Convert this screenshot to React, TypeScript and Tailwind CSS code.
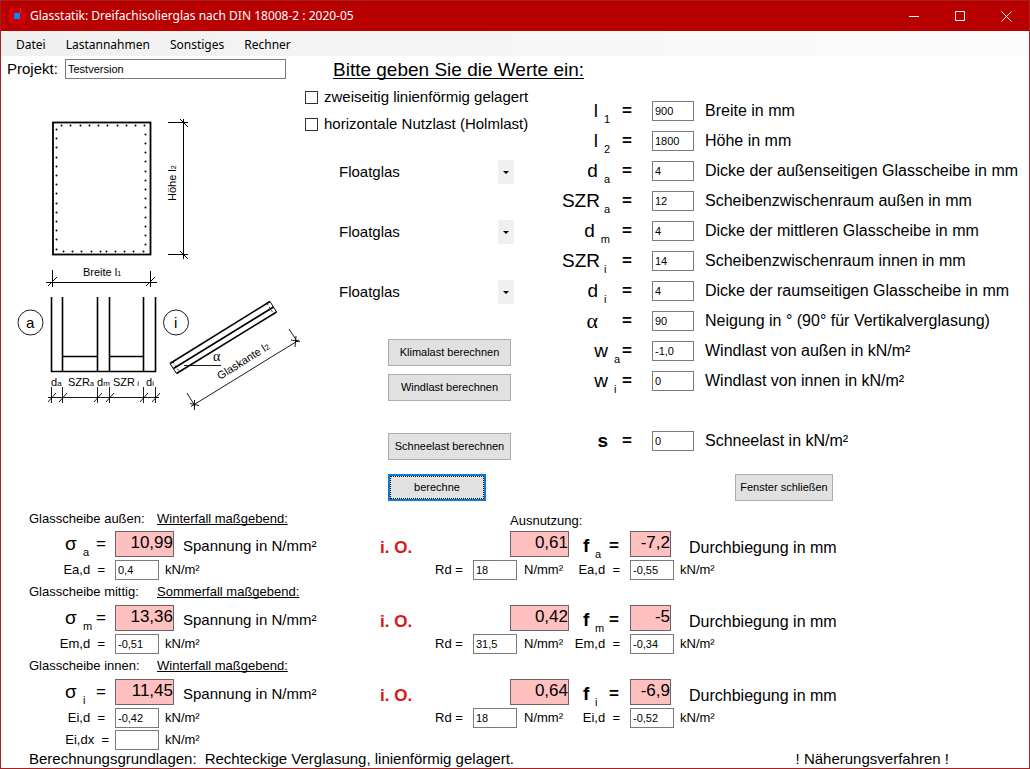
import { useState } from "react";
import type { ReactNode } from "react";

type Field = {
  id: string;
  base: string;
  sub: string;
  value: string;
  text: string;
  cell: string;
  baseClass: string;
};

const SYMBOL = "gap-1.5 pr-2.5";
const SPACER = "gap-1 pr-2.5";
const LOAD = "gap-1.5";

const fields: Field[] = [
  { id: "l1", base: "l", sub: "1", value: "900", text: "Breite in mm", cell: SYMBOL, baseClass: "" },
  { id: "l2", base: "l", sub: "2", value: "1800", text: "Höhe in mm", cell: SYMBOL, baseClass: "" },
  { id: "da", base: "d", sub: "a", value: "4", text: "Dicke der außenseitigen Glasscheibe in mm", cell: SYMBOL, baseClass: "" },
  { id: "szra", base: "SZR", sub: "a", value: "12", text: "Scheibenzwischenraum außen in mm", cell: SPACER, baseClass: "" },
  { id: "dm", base: "d", sub: "m", value: "4", text: "Dicke der mittleren Glasscheibe in mm", cell: SYMBOL, baseClass: "" },
  { id: "szri", base: "SZR", sub: "i", value: "14", text: "Scheibenzwischenraum innen in mm", cell: SPACER, baseClass: "" },
  { id: "di", base: "d", sub: "i", value: "4", text: "Dicke der raumseitigen Glasscheibe in mm", cell: SYMBOL, baseClass: "" },
  { id: "alpha", base: "α", sub: "", value: "90", text: "Neigung in ° (90° für Vertikalverglasung)", cell: SYMBOL, baseClass: "font-['Liberation_Serif',serif] text-[22px]" },
  { id: "wa", base: "w", sub: "a", value: "-1,0", text: "Windlast von außen in kN/m²", cell: LOAD, baseClass: "" },
  { id: "wi", base: "w", sub: "i", value: "0", text: "Windlast von innen in kN/m²", cell: LOAD, baseClass: "" },
];

const snow: Field = {
  id: "s", base: "s", sub: "", value: "0", text: "Schneelast in kN/m²", cell: LOAD, baseClass: "font-bold",
};

const panes = [
  { sub: "a", name: "Glasscheibe außen:", decisive: "Winterfall maßgebend:", stress: "10,99", load: "0,4", use: "0,61", rd: "18", bend: "-7,2", bendLoad: "-0,55" },
  { sub: "m", name: "Glasscheibe mittig:", decisive: "Sommerfall maßgebend:", stress: "13,36", load: "-0,51", use: "0,42", rd: "31,5", bend: "-5", bendLoad: "-0,34" },
  { sub: "i", name: "Glasscheibe innen:", decisive: "Winterfall maßgebend:", stress: "11,45", load: "-0,42", use: "0,64", rd: "18", bend: "-6,9", bendLoad: "-0,52" },
];

const inputClass = "h-5 rounded-none border border-[#7a7a7a] bg-white px-0.5 text-[11px] outline-none";
const resultClass = "h-[26px] rounded-none border border-[#6b6465] bg-[#ffc0c0] pb-0.5 text-right text-[17px] leading-5 outline-none";
const buttonClass = "h-[27px] border border-[#adadad] bg-[#e1e1e1] text-[11px] hover:bg-[#e5f1fb]";
const resultGrid = "grid h-[30px] grid-cols-[114px_265px_130px_120px_1fr] grid-rows-[30px] items-center";
const loadGrid = "grid h-[22px] grid-cols-[114px_320px_38px_157px_1fr] items-center";

function FieldRow({ field }: { field: Field }) {
  return (
    <div className="grid h-[30px] grid-cols-[60px_32px_53px_1fr] items-center">
      <label htmlFor={field.id} className={`flex items-center justify-end text-[19px] leading-6 ${field.cell}`}>
        <span className={field.baseClass}>{field.base}</span>
        <span className="min-w-1.5 pt-4 text-[11px] leading-3">{field.sub}</span>
      </label>
      <span className="pl-0.5 text-[17px] font-bold">=</span>
      <input id={field.id} defaultValue={field.value} className={`w-[42px] ${inputClass}`} />
      <span className="text-[16px] whitespace-nowrap">{field.text}</span>
    </div>
  );
}

function GlassSelect({ label }: { label: string }) {
  return (
    <div className="flex h-[60px] items-center pl-[31px]">
      <div className="relative w-[178px]">
        <select aria-label={label} className="h-[23px] w-full appearance-none bg-white pl-[3px] text-[15px] outline-none">
          <option>Floatglas</option>
          <option>ESG</option>
          <option>VSG</option>
        </select>
        <span className="pointer-events-none absolute inset-y-0 right-0 flex w-4 items-center justify-center bg-[#f0f0f0]">
          <svg width="6" height="3" viewBox="0 0 6 3">
            <path d="M0 0h6L3 3z" />
          </svg>
        </span>
      </div>
    </div>
  );
}

function CheckRow({ children }: { children: ReactNode }) {
  return (
    <label className="flex h-[27px] items-center gap-1.5 text-[15px] whitespace-nowrap">
      <input type="checkbox" className="size-[13px] appearance-none border border-[#333] bg-white checked:bg-[#0078d7]" />
      {children}
    </label>
  );
}

function Sketch() {
  const top = [61, 70, 80, 89, 98, 107, 117, 126, 135, 144];
  const bottom = [63, 72, 81, 91, 100, 106, 115, 124, 133, 143];
  const left = [129, 138, 147, 157, 166, 175, 184, 193, 203, 212, 221, 230, 239, 249];
  const right = [134, 143, 152, 161, 171, 180, 189, 198, 207, 217, 226, 235, 244];
  const ticks = [51, 62, 97, 109, 143, 155];

  return (
    <svg className="h-[330px] w-[300px]" viewBox="1 84 300 330" fill="none" stroke="#000" fontFamily="Liberation Sans, sans-serif" role="img" aria-label="Skizze der Verglasung">
      <rect x="53" y="122.5" width="97.5" height="132" strokeWidth="1.8" />
      <g fill="#000" stroke="none">
        {top.map((x) => <circle key={`t${x}`} cx={x + 0.5} cy="125.5" r="1" />)}
        {bottom.map((x) => <circle key={`b${x}`} cx={x + 0.5} cy="251.5" r="1" />)}
        {left.map((y) => <circle key={`l${y}`} cx="56.5" cy={y + 0.5} r="1" />)}
        {right.map((y) => <circle key={`r${y}`} cx="145.5" cy={y + 0.5} r="1" />)}
      </g>

      {/* dimension lines of the elevation */}
      <path d="M183.5 119v140M168 122.5h20M168 254.5h20M180 119l8 8M180 251l8 8M46 282.5h111M52.5 270v17M150.5 271v16M48 286l9-9M146 286l9-9" />

      {/* section through the unit */}
      <path d="M51.5 297v74.5h104V297M62.5 297v74.5M97.5 297v74.5M109.5 297v74.5M143.5 297v74.5" strokeWidth="1.6" />
      <path d="M62.5 356.5h35M109.5 356.5h34" strokeWidth="1.5" />
      <circle cx="30.5" cy="322.5" r="12.5" strokeWidth="0.9" />
      <circle cx="176" cy="322.5" r="12.5" strokeWidth="0.9" />
      <path d="M48 397.5h111" strokeWidth="0.9" />
      {ticks.map((x) => (
        <path key={x} d={`M${x + 0.5} 387v16M${x - 3} 402l8-9`} strokeWidth="0.9" />
      ))}

      {/* inclined pane */}
      <path d="M170 363.5L270 301.5M173.5 368.5L273.5 307M176.5 373.5L276.5 312" strokeWidth="1.6" />
      <path d="M170 363.5l6.5 10M270 301.5l6.5 10.5" />
      <path d="M173 362l6 9.5M267 303.5l6.5 10" strokeWidth="0.8" strokeDasharray="2 2" />
      <path d="M184 365.5h37M191 406.5L299 340M187 393l8 13M289 329l8.5 13M190 403.5l9 2M194.5 400v10M291 340l9 1.5M296 336l-1 11" strokeWidth="0.9" />

      <g fill="#000" stroke="none" fontSize="11">
        <text x="83" y="276">Breite l<tspan fontSize="7">1</tspan></text>
        <text transform="translate(176 201) rotate(-90)">Höhe l<tspan fontSize="7">2</tspan></text>
        <text x="26" y="328" fontSize="15">a</text>
        <text x="174" y="328" fontSize="15">i</text>
        <text x="51" y="386">d<tspan fontSize="8">a</tspan></text>
        <text x="68" y="386">SZR<tspan fontSize="7">a</tspan></text>
        <text x="97" y="386">d<tspan fontSize="8">m</tspan></text>
        <text x="113" y="386">SZR<tspan fontSize="8"> i</tspan></text>
        <text x="146" y="386">d<tspan fontSize="8">i</tspan></text>
        <text x="213" y="361" fontSize="14" fontFamily="Liberation Serif, serif">α</text>
        <text transform="translate(220 380) rotate(-32)">Glaskante l<tspan fontSize="8">2</tspan></text>
      </g>
    </svg>
  );
}

type Pane = (typeof panes)[number];

function PaneResult({ pane, first }: { pane: Pane; first: boolean }) {
  const id = (name: string) => `${name}-${pane.sub}`;

  return (
    <section className="text-[13px] whitespace-nowrap">
      <div className="grid h-[22px] grid-cols-[128px_353px_1fr] items-center pl-7 leading-5">
        <span>{pane.name}</span>
        <span className="underline [text-decoration-skip-ink:none]">{pane.decisive}</span>
        {first && <span className="pt-1">Ausnutzung:</span>}
      </div>
      <div className={resultGrid}>
        <label htmlFor={id("sigma")} className="flex items-center pl-16">
          <span className="w-[18px] text-[19px] leading-6">σ</span>
          <span className="w-[13px] pt-4 text-[11px] leading-3">{pane.sub}</span>
          <span className="text-[17px]">=</span>
        </label>
        <div className="flex items-center gap-[9px]">
          <input id={id("sigma")} readOnly value={pane.stress} className={`w-[59px] ${resultClass}`} />
          <span className="pt-1 text-[15px]">Spannung in N/mm²</span>
        </div>
        <strong className="pt-2 text-[17px] leading-5 text-[#dc1414]">i. O.</strong>
        <div className="flex items-center">
          <input aria-label="Ausnutzung" readOnly value={pane.use} className={`w-[59px] ${resultClass}`} />
          <label htmlFor={id("f")} className="flex items-center pt-1 pl-3.5">
            <b className="w-3 text-[19px] leading-6">f</b>
            <span className="w-3.5 pt-4 text-[11px] leading-3">{pane.sub}</span>
            <b className="text-[17px]">=</b>
          </label>
        </div>
        <div className="flex items-center gap-[18px]">
          <input id={id("f")} readOnly value={pane.bend} className={`w-[41px] ${resultClass}`} />
          <span className="pt-2 text-[16px] leading-5">Durchbiegung in mm</span>
        </div>
      </div>
      <div className={loadGrid}>
        <label htmlFor={id("e")} className="pr-2.5 text-right whitespace-pre">{`E${pane.sub},d  =`}</label>
        <div className="flex items-center gap-1.5">
          <input id={id("e")} readOnly value={pane.load} className={`w-11 ${inputClass}`} />
          <span>kN/m²</span>
        </div>
        <label htmlFor={id("rd")}>Rd =</label>
        <div className="flex items-center gap-[7px]">
          <input id={id("rd")} readOnly value={pane.rd} className={`w-11 ${inputClass}`} />
          <span>N/mm²</span>
          <label htmlFor={id("ef")} className="grow pr-2.5 text-right whitespace-pre">{`E${pane.sub},d  =`}</label>
        </div>
        <div className="flex items-center gap-1.5">
          <input id={id("ef")} readOnly value={pane.bendLoad} className={`w-11 ${inputClass}`} />
          <span>kN/m²</span>
        </div>
      </div>
    </section>
  );
}

export default function App() {
  const [project, setProject] = useState("Testversion");

  return (
    <div className="flex min-h-screen flex-col border border-[#a52020] bg-white font-['Liberation_Sans',Arial,sans-serif] text-black">
      <header className="flex h-[30px] items-center bg-[#b80000] text-white">
        <svg className="ml-2 size-4" viewBox="0 0 16 16">
          <path fill="#d00000" d="M0 0h16v16H0z" />
          <path fill="#0a84ff" d="M5 5h6v6H5z" />
          <path stroke="#a04060" d="M11.5 0v5" />
        </svg>
        <h1 className="ml-[5px] grow font-['Noto_Sans',sans-serif] text-[12px]">Glasstatik: Dreifachisolierglas nach DIN 18008-2 : 2020-05</h1>
        <button type="button" aria-label="Minimieren" className="flex h-full w-[46px] items-center justify-center">
          <svg width="10" height="10" stroke="#fff"><path d="M0 5.5h10" /></svg>
        </button>
        <button type="button" aria-label="Maximieren" className="flex h-full w-[46px] items-center justify-center">
          <svg width="10" height="10" fill="none" stroke="#fff"><path d="M.5.5h9v9h-9z" /></svg>
        </button>
        <button type="button" aria-label="Schließen" className="flex h-full w-[46px] items-center justify-center">
          <svg width="11" height="11" stroke="#fff"><path d="M.5.5l10 10M10.5.5l-10 10" /></svg>
        </button>
      </header>

      <nav className="flex h-[25px] items-center gap-5 bg-linear-to-r from-[#f0f0f0] to-[#fcfcfc] pt-0.5 pl-[15px] font-['Noto_Sans',sans-serif] text-[12px]">
        <button type="button">Datei</button>
        <button type="button">Lastannahmen</button>
        <button type="button">Sonstiges</button>
        <button type="button">Rechner</button>
      </nav>

      <main>
        <div className="flex h-[26px] items-center pl-1.5">
          <label htmlFor="project" className="w-[58px] text-[15px]">Projekt:</label>
          <input id="project" value={project} onChange={(e) => setProject(e.target.value)} className={`w-[221px] ${inputClass}`} />
          <h2 className="pt-[3px] pl-[47px] text-[19px] underline underline-offset-2 [text-decoration-skip-ink:none]">Bitte geben Sie die Werte ein:</h2>
        </div>

        <div className="grid grid-cols-[304px_255px_1fr]">
          <div className="pt-0.5">
            <Sketch />
          </div>

          <div className="flex flex-col pt-0.5 pb-1.5">
            <CheckRow>zweiseitig linienförmig gelagert</CheckRow>
            <CheckRow>horizontale Nutzlast (Holmlast)</CheckRow>
            <div className="pt-1">
              <GlassSelect label="Glasart außen" />
              <GlassSelect label="Glasart mittig" />
              <GlassSelect label="Glasart innen" />
            </div>
            <div className="flex flex-col items-start pt-[17px] pl-[83px]">
              <button type="button" className={`w-[123px] ${buttonClass}`}>Klimalast berechnen</button>
              <button type="button" className={`mt-2 w-[123px] ${buttonClass}`}>Windlast berechnen</button>
              <button type="button" className={`mt-8 w-[123px] ${buttonClass}`}>Schneelast berechnen</button>
              <button type="button" className="mt-3.5 flex h-[27px] w-[98px] border-2 border-[#0f78d4] bg-[#e1e1e1] text-[11px]">
                <span className="flex size-full items-center justify-center border border-dotted border-black">berechne</span>
              </button>
            </div>
          </div>

          <div className="pt-3.5">
            {fields.map((field) => (
              <FieldRow key={field.id} field={field} />
            ))}
            <div className="pt-[30px]">
              <FieldRow field={snow} />
            </div>
            <button type="button" className={`mt-[18px] ml-[175px] w-[98px] ${buttonClass}`}>Fenster schließen</button>
          </div>
        </div>

        {panes.map((pane, i) => (
          <PaneResult key={pane.sub} pane={pane} first={i === 0} />
        ))}
        <div className={`text-[13px] ${loadGrid}`}>
          <label htmlFor="e-dx" className="pr-1.5 text-right whitespace-pre">{"Ei,dx  ="}</label>
          <div className="flex items-center gap-1.5">
            <input id="e-dx" readOnly value="" className={`w-11 ${inputClass}`} />
            <span>kN/m²</span>
          </div>
        </div>
      </main>

      <footer className="flex h-4 items-center pr-20 pl-7 text-[15px] leading-4">
        <span>Berechnungsgrundlagen:</span>
        <span className="grow pl-2">Rechteckige Verglasung, linienförmig gelagert.</span>
        <span>! Näherungsverfahren !</span>
      </footer>
    </div>
  );
}
